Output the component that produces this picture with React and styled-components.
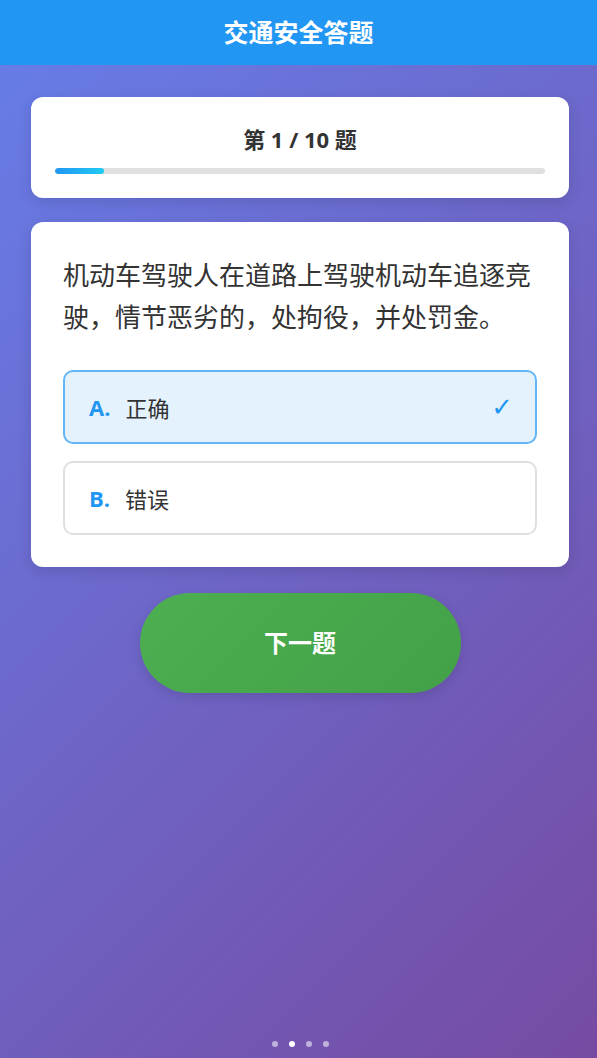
import React, { useState } from 'react';
import styled, { createGlobalStyle } from 'styled-components';

const GlobalStyle = createGlobalStyle`
  * {
    box-sizing: border-box;
  }

  html, body {
    margin: 0;
    padding: 0;
  }

  body {
    font-family: "Open Sans", "Noto Sans CJK SC", sans-serif;
    color: #333;
  }
`;

const questions = [
  {
    text: '机动车驾驶人在道路上驾驶机动车追逐竞驶，情节恶劣的，处拘役，并处罚金。',
    options: [
      { key: 'A', label: '正确' },
      { key: 'B', label: '错误' },
    ],
  },
];

const Page = styled.div`
  min-height: 100vh;
  display: flex;
  flex-direction: column;
  background: linear-gradient(135deg, #667eea 0%, #764ba2 100%);
`;

const Header = styled.header`
  height: 65px;
  background: #2196f3;
  display: flex;
  align-items: center;
  justify-content: center;
`;

const HeaderTitle = styled.h1`
  margin: 0;
  color: #fff;
  font-size: 25px;
  font-weight: 700;
  line-height: 1;
`;

const Content = styled.main`
  flex: 1;
  display: flex;
  flex-direction: column;
  padding: 32px 28px 0 31px;
`;

const Card = styled.section`
  background: #fff;
  border-radius: 12px;
  box-shadow: 0 4px 14px rgba(0, 0, 0, 0.12);
`;

const ProgressCard = styled(Card)`
  padding: 26px 24px 24px;
`;

const ProgressTitle = styled.div`
  text-align: center;
  font-size: 22px;
  font-weight: 700;
  line-height: 32px;
  color: #333;
`;

const ProgressTrack = styled.div`
  margin-top: 13px;
  height: 6px;
  border-radius: 3px;
  background: #e0e0e0;
  overflow: hidden;
`;

const ProgressFill = styled.div`
  height: 100%;
  border-radius: 3px;
  background: linear-gradient(90deg, #2196f3, #21cbf3);
`;

const QuestionCard = styled(Card)`
  margin-top: 24px;
  padding: 32px;
`;

const QuestionText = styled.p`
  margin: 0 0 32px;
  font-size: 26px;
  line-height: 42px;
  color: #333;
`;

const OptionList = styled.div`
  display: flex;
  flex-direction: column;
  gap: 17px;
`;

const Option = styled.button`
  display: flex;
  align-items: center;
  width: 100%;
  height: 74px;
  padding: 0 22px 0 24px;
  border-radius: 10px;
  border: 2px solid ${p => (p.$selected ? '#64b5f6' : '#e0e0e0')};
  background: ${p => (p.$selected ? '#e3f2fd' : '#fff')};
  font-family: inherit;
  text-align: left;
  cursor: pointer;
`;

const OptionKey = styled.span`
  font-size: 22px;
  font-weight: 700;
  color: #2196f3;
  margin-right: 15px;
`;

const OptionLabel = styled.span`
  flex: 1;
  font-size: 22px;
  color: #333;
`;

const Check = styled.span`
  font-size: 26px;
  color: #2196f3;
  font-family: "DejaVu Sans", sans-serif;
`;

const NextButton = styled.button`
  align-self: center;
  margin-top: 26px;
  width: 321px;
  height: 100px;
  padding: 0 0 3px;
  border: none;
  border-radius: 50px;
  background: linear-gradient(135deg, #4caf50, #43a047);
  box-shadow: 0 4px 12px rgba(0, 0, 0, 0.12);
  color: #fff;
  font-family: inherit;
  font-size: 24px;
  font-weight: 700;
  cursor: pointer;
`;

const Dots = styled.div`
  margin-top: auto;
  padding: 0 0 11px;
  display: flex;
  justify-content: center;
  gap: 11px;
`;

const Dot = styled.span`
  width: 6px;
  height: 6px;
  border-radius: 50%;
  background: ${p => (p.$active ? '#fff' : 'rgba(255, 255, 255, 0.55)')};
`;

export default function App() {
  const [current] = useState(0);
  const [selected, setSelected] = useState('A');
  const total = 10;
  const q = questions[current];

  return (
    <Page>
      <GlobalStyle />
      <Header>
        <HeaderTitle>交通安全答题</HeaderTitle>
      </Header>
      <Content>
        <ProgressCard>
          <ProgressTitle>第 {current + 1} / {total} 题</ProgressTitle>
          <ProgressTrack>
            <ProgressFill style={{ width: `${((current + 1) / total) * 100}%` }} />
          </ProgressTrack>
        </ProgressCard>

        <QuestionCard>
          <QuestionText>{q.text}</QuestionText>
          <OptionList>
            {q.options.map(opt => (
              <Option
                key={opt.key}
                $selected={selected === opt.key}
                onClick={() => setSelected(opt.key)}
              >
                <OptionKey>{opt.key}.</OptionKey>
                <OptionLabel>{opt.label}</OptionLabel>
                {selected === opt.key && <Check>✓</Check>}
              </Option>
            ))}
          </OptionList>
        </QuestionCard>

        <NextButton>下一题</NextButton>

        <Dots>
          {[0, 1, 2, 3].map(i => (
            <Dot key={i} $active={i === 1} />
          ))}
        </Dots>
      </Content>
    </Page>
  );
}
